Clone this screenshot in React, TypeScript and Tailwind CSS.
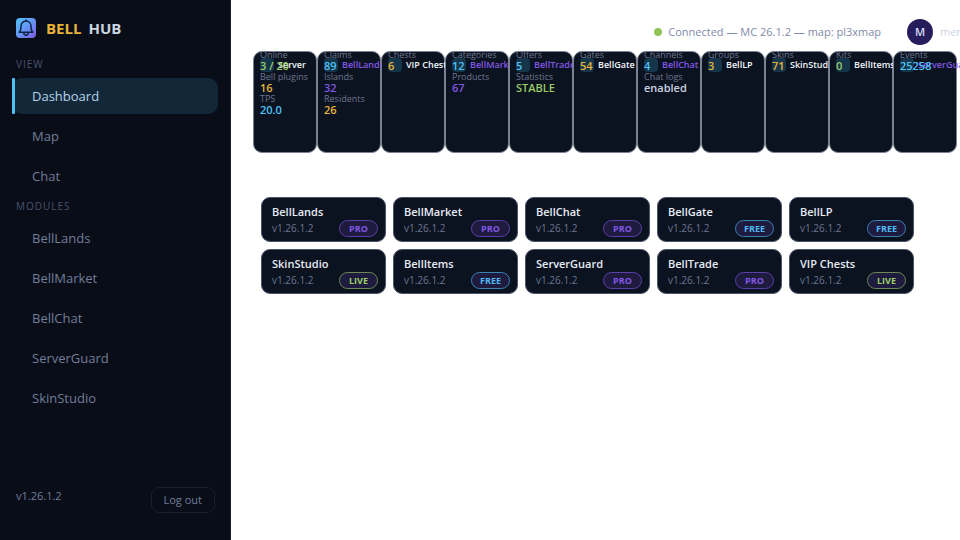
type Stat = { label: string; value: string; color: string };
type StatCard = { name: string; pro?: boolean; stats: Stat[] };

const green = "text-[#9ccc65]";
const gold = "text-[#e8b339]";
const sky = "text-[#4fc3f7]";
const violet = "text-[#8257e5]";

const statCards: StatCard[] = [
  {
    name: "Server",
    stats: [
      { label: "Online", value: "3 / 20", color: green },
      { label: "Bell plugins", value: "16", color: gold },
      { label: "TPS", value: "20.0", color: sky },
    ],
  },
  {
    name: "BellLands",
    pro: true,
    stats: [
      { label: "Claims", value: "89", color: sky },
      { label: "Islands", value: "32", color: violet },
      { label: "Residents", value: "26", color: gold },
    ],
  },
  { name: "VIP Chests", stats: [{ label: "Chests", value: "6", color: gold }] },
  {
    name: "BellMarket",
    pro: true,
    stats: [
      { label: "Categories", value: "12", color: sky },
      { label: "Products", value: "67", color: violet },
    ],
  },
  {
    name: "BellTrade",
    pro: true,
    stats: [
      { label: "Offers", value: "5", color: sky },
      { label: "Statistics", value: "STABLE", color: green },
    ],
  },
  { name: "BellGate", stats: [{ label: "Gates", value: "54", color: gold }] },
  {
    name: "BellChat Pro",
    pro: true,
    stats: [
      { label: "Channels", value: "4", color: sky },
      { label: "Chat logs", value: "enabled", color: "text-[#cbd5e1]" },
    ],
  },
  { name: "BellLP", stats: [{ label: "Groups", value: "3", color: gold }] },
  { name: "SkinStudio", stats: [{ label: "Skins", value: "71", color: gold }] },
  { name: "BellItems", stats: [{ label: "Kits", value: "0", color: green }] },
  {
    name: "ServerGuard",
    pro: true,
    stats: [{ label: "Events", value: "25258", color: sky }],
  },
];

const modules = [
  { name: "BellLands", tier: "PRO" },
  { name: "BellMarket", tier: "PRO" },
  { name: "BellChat", tier: "PRO" },
  { name: "BellGate", tier: "FREE" },
  { name: "BellLP", tier: "FREE" },
  { name: "SkinStudio", tier: "LIVE" },
  { name: "BellItems", tier: "FREE" },
  { name: "ServerGuard", tier: "PRO" },
  { name: "BellTrade", tier: "PRO" },
  { name: "VIP Chests", tier: "LIVE" },
];

const tierStyles: Record<string, string> = {
  PRO: "border-[#5b3fa8] text-[#8257e5]",
  FREE: "border-[#3a83b5] text-[#4fb8f0]",
  LIVE: "border-[#6c8a55] text-[#9ccc65]",
};

function Logo() {
  return (
    <svg viewBox="0 0 20 20" className="size-5" aria-hidden="true">
      <defs>
        <linearGradient id="logo" x1="0" y1="0" x2="1" y2="1">
          <stop offset="0" stopColor="#4fc3f7" />
          <stop offset="0.5" stopColor="#6596f5" />
          <stop offset="1" stopColor="#8257e5" />
        </linearGradient>
      </defs>
      <rect width="20" height="20" rx="4" fill="url(#logo)" />
      <g fill="none" stroke="#0f2547" strokeWidth="1.5" strokeLinecap="round" strokeLinejoin="round">
        <path d="M3.2 14.3C5 12.6 5 11 5 8.2C5 5.2 7.2 2.9 10 2.9C12.8 2.9 15 5.2 15 8.2C15 11 15 12.6 16.8 14.3Z" />
        <path d="M7.8 14.8C7.8 16.3 8.7 17.2 10 17.2C11.3 17.2 12.2 16.3 12.2 14.8" />
        <path d="M10 2V2.9" />
      </g>
    </svg>
  );
}

function NavItem({ label, active }: { label: string; active?: boolean }) {
  return (
    <a
      href="#"
      aria-current={active ? "page" : undefined}
      className={
        active
          ? "relative flex h-9 items-center rounded-[10px] bg-[#122838] pt-px pl-5 text-[#b5d3ea] before:absolute before:inset-y-0 before:left-0 before:w-[3px] before:rounded-[1px] before:bg-[#4fc3f7]"
          : "flex h-9 items-center rounded-[10px] pt-px pl-5 text-[#737d99]"
      }
    >
      {label}
    </a>
  );
}

function Sidebar() {
  return (
    <aside className="flex w-[231px] shrink-0 flex-col border-r border-[#10233f] bg-[#080d18] px-3">
      <div className="flex items-center gap-[10px] pl-1 pt-[18px] text-[15px] leading-5 font-bold">
        <Logo />
        <span className="flex gap-[7px]">
          <span className="text-[#e8b339]">BELL</span>
          <span className="text-[#cbd5e1]">HUB</span>
        </span>
      </div>
      <nav className="mt-[18px] text-[13px]">
        <h2 className="pl-1 text-[10px] leading-4 tracking-[1px] text-[#4a536c]">VIEW</h2>
        <div className="mt-[6px] flex flex-col gap-1">
          <NavItem label="Dashboard" active />
          <NavItem label="Map" />
          <NavItem label="Chat" />
        </div>
        <h2 className="mt-1 pl-1 text-[10px] leading-4 tracking-[1px] text-[#4a536c]">MODULES</h2>
        <div className="mt-[6px] flex flex-col gap-1">
          <NavItem label="BellLands" />
          <NavItem label="BellMarket" />
          <NavItem label="BellChat" />
          <NavItem label="ServerGuard" />
          <NavItem label="SkinStudio" />
        </div>
      </nav>
      <div className="mt-auto flex items-start justify-between pb-[27px] pl-1 pr-[3px] text-[11px]">
        <span className="leading-[18px] text-[#737d99]">v1.26.1.2</span>
        <button type="button" className="h-[26px] rounded-lg border border-[#141f30] px-3 text-[#737d99]">
          Log out
        </button>
      </div>
    </aside>
  );
}

function StatTile({ card }: { card: StatCard }) {
  return (
    <article className="relative h-[102px] rounded-[9px] border border-[#7c8294] bg-[#0b1220] px-[6px] whitespace-nowrap">
      <div className="absolute top-[6px] left-[6px] flex items-center gap-1">
        <span className="size-[14px] rounded-[4px] bg-[#15354a]" />
        <h3 className={card.pro ? "text-[9px] font-semibold text-[#8257e5]" : "text-[9px] font-semibold text-[#f1f5f9]"}>
          {card.name}
        </h3>
      </div>
      <dl className="relative -mt-[3px] leading-[11px]">
        {card.stats.map((stat) => (
          <div key={stat.label}>
            <dt className="text-[9px] text-[#6e778f]">{stat.label}</dt>
            <dd className={`text-[11px] font-semibold ${stat.color}`}>{stat.value}</dd>
          </div>
        ))}
      </dl>
    </article>
  );
}

function ModuleCard({ name, tier }: { name: string; tier: string }) {
  return (
    <article className="rounded-[9px] border border-[#4c5468] bg-[#0b1220] pt-[6px] pr-[7px] pb-1 pl-[10px]">
      <h3 className="text-[11px] leading-4 font-semibold text-[#e8edf5]">{name}</h3>
      <div className="flex items-center justify-between">
        <span className="text-[10px] text-[#6e778f]">v1.26.1.2</span>
        <span
          className={`flex h-[17px] w-[39px] items-center justify-center rounded-full border bg-[#1e1b3f] text-[9px] font-bold ${tierStyles[tier]}`}
        >
          {tier}
        </span>
      </div>
    </article>
  );
}

export default function App() {
  return (
    <div className="flex min-h-screen overflow-hidden bg-white font-['Open_Sans',sans-serif]">
      <Sidebar />
      <main className="min-w-0 flex-1 overflow-hidden">
        <header className="flex h-[51px] items-center justify-end pt-[13px] text-[11px] whitespace-nowrap">
          <span className="size-2 rounded-full bg-[#8fc257]" />
          <span className="ml-[6px] text-[#7f8ba8]">Connected — MC 26.1.2 — map: pl3xmap</span>
          <span className="ml-[26px] flex size-[26px] items-center justify-center rounded-full bg-[#261d5c] font-semibold text-[#d6def0]">
            M
          </span>
          <span className="ml-[7px] w-5 overflow-hidden text-[#cbd5e1]">mer</span>
        </header>
        <section aria-label="Statistics" className="grid grid-cols-11 pl-[22px] pr-[3px]">
          {statCards.map((card) => (
            <StatTile key={card.name} card={card} />
          ))}
        </section>
        <section aria-label="Modules" className="mt-11 grid grid-cols-5 gap-[7px] pr-[46px] pl-[30px]">
          {modules.map((module) => (
            <ModuleCard key={module.name} {...module} />
          ))}
        </section>
      </main>
    </div>
  );
}
